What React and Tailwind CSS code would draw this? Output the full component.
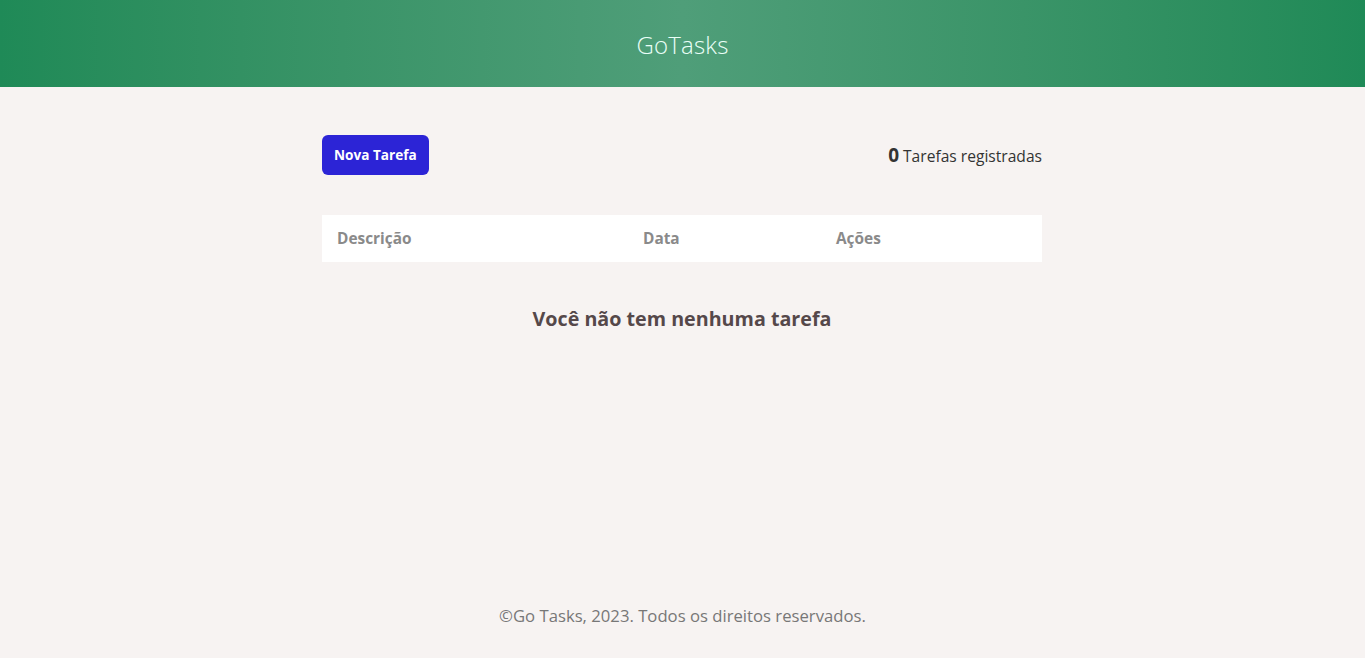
import React from "react";

const tasks = [];

export default function App() {
    return (
        <div className="min-h-[658px] w-[1365px] bg-[#f7f3f2] flex flex-col font-['Open_Sans',sans-serif]">
            <header className="h-[87px] pt-[3px] flex items-center justify-center bg-gradient-to-r from-[#1f8a57] via-[#4f9e79] to-[#1f8a57]">
                <h1 className="text-[24px] font-light text-[#eafff7] tracking-[0.2px]">GoTasks</h1>
            </header>

            <main className="w-[720px] ml-[322px] flex-1">
                <div className="mt-[48px] flex items-center justify-between">
                    <button className="h-[40px] px-[12px] rounded-[6px] bg-[#2c24d6] text-white text-[13.6px] font-bold">
                        Nova Tarefa
                    </button>
                    <p className="text-[15.6px] text-[#333] font-medium">
                        <span className="text-[19px] font-bold mr-[4px]">{tasks.length}</span>
                        Tarefas registradas
                    </p>
                </div>

                <table className="w-full mt-[40px] bg-white">
                    <thead>
                        <tr className="h-[47px] text-left text-[15.4px] font-bold text-[#8a8a8a]">
                            <th className="w-[306px] pl-[15px] font-bold">Descrição</th>
                            <th className="w-[193px] pl-[15px] font-bold">Data</th>
                            <th className="pl-[15px] font-bold">Ações</th>
                        </tr>
                    </thead>
                </table>

                {tasks.length === 0 && (
                    <p className="mt-[42px] text-center text-[19.7px] font-bold text-[#55484a]">
                        Você não tem nenhuma tarefa
                    </p>
                )}
            </main>

            <footer className="h-[86px] pt-[31px] text-center text-[16.7px] text-[#777]">
                ©Go Tasks, 2023. Todos os direitos reservados.
            </footer>
        </div>
    );
}
